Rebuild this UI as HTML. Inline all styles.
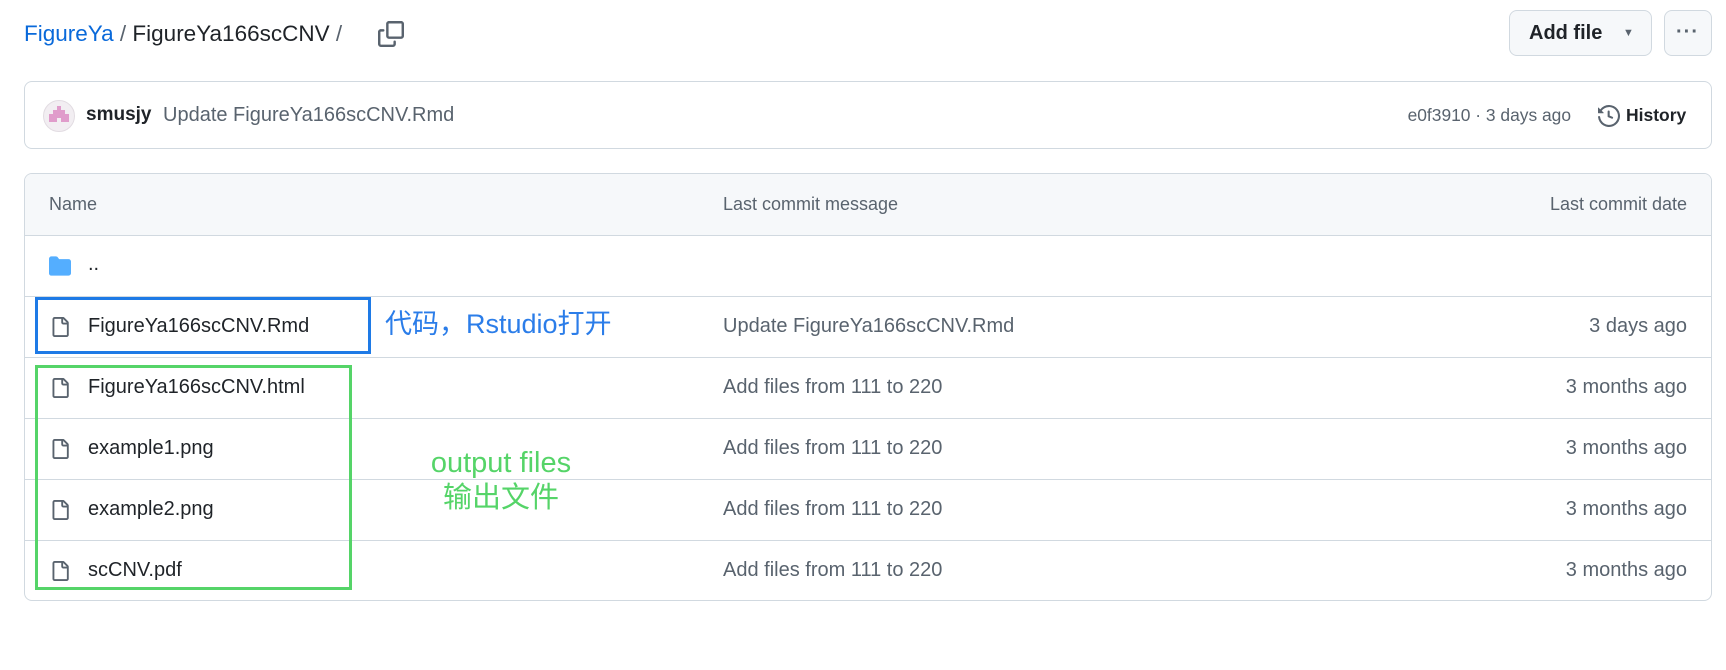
<!DOCTYPE html>
<html><head><meta charset="utf-8"><style>
*{box-sizing:border-box;margin:0;padding:0}
body{width:1726px;height:670px;background:#fff;font-family:"Liberation Sans","Noto Sans CJK SC",sans-serif;color:#1f2328;position:relative;overflow:hidden}
.a{position:absolute;white-space:nowrap}
.crumb{top:20px;left:24px;font-size:22.5px;line-height:28px}
.btn{position:absolute;top:10px;height:46px;border:1px solid #d1d9e0;border-radius:8px;background:#f6f8fa}
.box{position:absolute;left:24px;width:1688px;border:1px solid #d1d9e0;border-radius:8px}
.row{position:absolute;left:0;width:100%;height:61px;border-top:1px solid #d1d9e0;font-size:20px}
.row .n{position:absolute;left:63px;top:18px}
.row .m{position:absolute;left:698px;top:18px;color:#59636e}
.row .d{position:absolute;right:24px;top:18px;color:#59636e}
.row svg{position:absolute;left:25px;top:19px}
</style></head><body>
<div class="a crumb"><span style="color:#0969da">FigureYa</span> <span style="color:#59636e">/</span> FigureYa166scCNV <span style="color:#59636e">/</span></div>
<svg class="a" style="left:378px;top:21px" width="26" height="26" viewBox="0 0 16 16" fill="#59636e"><path d="M0 6.75C0 5.780.78 5 1.75 5h1.5a.75.75 0 0 1 0 1.5h-1.5a.25.25 0 0 0-.25.25v7.5c0 .14.11.25.25.25h7.5a.25.25 0 0 0 .25-.25v-1.5a.75.75 0 0 1 1.5 0v1.5A1.75 1.75 0 0 1 9.25 16h-7.5A1.75 1.75 0 0 1 0 14.25Z"/><path d="M5 1.75C5 .78 5.78 0 6.75 0h7.5C15.22 0 16 .78 16 1.75v7.5A1.75 1.75 0 0 1 14.25 11h-7.5A1.75 1.75 0 0 1 5 9.25Zm1.750-.25a.25.25 0 0 0-.25.25v7.5c0 .14.11.25.25.25h7.5a.25.25 0 0 0 .25-.25v-7.5a.25.25 0 0 0-.25-.25Z"/></svg>
<div class="btn" style="left:1509px;width:143px"><span class="a" style="left:19px;top:11px;font-size:20px;font-weight:bold">Add file</span><span class="a" style="left:113px;top:16px;font-size:11px;color:#59636e">▼</span></div>
<div class="btn" style="left:1664px;width:48px"><span class="a" style="left:11px;top:10px;font-size:20px;letter-spacing:1px;color:#59636e;font-weight:bold">···</span></div>

<div class="box" style="top:81px;height:68px">
 <div class="a" style="left:18px;top:18px;width:32px;height:32px;border-radius:50%;background:#f2eef2;border:1px solid #e2dce2"></div>
 <svg class="a" style="left:24px;top:24px" width="20" height="20" viewBox="0 0 5 5" fill="#e09ccb"><rect x="2" y="0" width="1" height="1"/><rect x="1" y="1" width="3" height="1"/><rect x="0" y="2" width="5" height="1"/><rect x="0" y="3" width="2" height="1"/><rect x="3" y="3" width="2" height="1"/></svg>
 <span class="a" style="left:61px;top:22px;font-size:19px;font-weight:bold">smusjy</span>
 <span class="a" style="left:138px;top:22px;font-size:20px;color:#59636e">Update FigureYa166scCNV.Rmd</span>
 <span class="a" style="right:140px;top:23px;font-size:17.4px;color:#59636e">e0f3910 · 3 days ago</span>
 <svg class="a" style="left:1573px;top:23px" width="22" height="22" viewBox="0 0 16 16" fill="#59636e"><path d="m.427 1.927 1.215 1.215a8.002 8.002 0 1 1-1.600 5.685.75.75 0 1 1 1.493-.154 6.5 6.5 0 1 0 1.18-4.458l1.358 1.358A.25.25 0 0 1 3.896 6H.25A.25.25 0 0 1 0 5.75V2.104a.25.25 0 0 1 .427-.177ZM7.75 4a.75.75 0 0 1 .75.75v2.992l2.028.812a.75.75 0 0 1-.557 1.392l-2.5-1A.751.751 0 0 1 7 8.25v-3.5A.75.75 0 0 1 7.75 4Z"/></svg>
 <span class="a" style="left:1601px;top:23px;font-size:17.5px;font-weight:bold">History</span>
</div>

<div class="box" style="top:173px;height:428px;overflow:hidden">
 <div class="a" style="left:0;top:0;width:100%;height:61px;background:#f6f8fa;font-size:18px;color:#59636e">
  <span class="a" style="left:24px;top:20px">Name</span>
  <span class="a" style="left:698px;top:20px">Last commit message</span>
  <span class="a" style="right:24px;top:20px">Last commit date</span>
 </div>
 <div class="row" style="top:61px">
  <svg style="left:23px;top:19px" width="24" height="22" viewBox="0 0 16 16" fill="#54aeff"><path d="M1.75 1A1.75 1.75 0 0 0 0 2.75v10.5C0 14.22.78 15 1.75 15h12.5A1.75 1.75 0 0 0 16 13.25v-8.5A1.75 1.75 0 0 0 14.25 3H7.5a.25.25 0 0 1-.2-.1l-.9-1.2C6.07 1.26 5.55 1 5 1H1.75Z"/></svg>
  <span class="n" style="top:17px">..</span>
 </div>
 <div class="row" style="top:122px"><svg width="20" height="22" viewBox="0 0 16 16" fill="#59636e"><path d="M2 1.75C2 .784 2.784 0 3.75 0h6.586c.464 0 .909.184 1.237.513l2.914 2.914c.329.328.513.773.513 1.237v9.586A1.75 1.75 0 0 1 13.25 16h-9.5A1.75 1.75 0 0 1 2 14.25Zm1.75-.25a.25.25 0 0 0-.25.25v12.5c0 .138.112.25.25.25h9.5a.25.25 0 0 0 .25-.25V6h-2.75A1.75 1.75 0 0 1 9 4.25V1.5Zm6.75.062V4.25c0 .138.112.25.25.25h2.688l-.011-.013-2.914-2.914-.013-.011Z"/></svg><span class="n">FigureYa166scCNV.Rmd</span><span class="m">Update FigureYa166scCNV.Rmd</span><span class="d">3 days ago</span></div>
 <div class="row" style="top:183px"><svg width="20" height="22" viewBox="0 0 16 16" fill="#59636e"><path d="M2 1.75C2 .784 2.784 0 3.75 0h6.586c.464 0 .909.184 1.237.513l2.914 2.914c.329.328.513.773.513 1.237v9.586A1.75 1.75 0 0 1 13.25 16h-9.5A1.75 1.75 0 0 1 2 14.25Zm1.75-.25a.25.25 0 0 0-.25.25v12.5c0 .138.112.25.25.25h9.5a.25.25 0 0 0 .25-.25V6h-2.75A1.75 1.75 0 0 1 9 4.25V1.5Zm6.75.062V4.25c0 .138.112.25.25.25h2.688l-.011-.013-2.914-2.914-.013-.011Z"/></svg><span class="n">FigureYa166scCNV.html</span><span class="m">Add files from 111 to 220</span><span class="d">3 months ago</span></div>
 <div class="row" style="top:244px"><svg width="20" height="22" viewBox="0 0 16 16" fill="#59636e"><path d="M2 1.75C2 .784 2.784 0 3.75 0h6.586c.464 0 .909.184 1.237.513l2.914 2.914c.329.328.513.773.513 1.237v9.586A1.75 1.75 0 0 1 13.25 16h-9.5A1.75 1.75 0 0 1 2 14.25Zm1.75-.25a.25.25 0 0 0-.25.25v12.5c0 .138.112.25.25.25h9.5a.25.25 0 0 0 .25-.25V6h-2.75A1.75 1.75 0 0 1 9 4.25V1.5Zm6.75.062V4.25c0 .138.112.25.25.25h2.688l-.011-.013-2.914-2.914-.013-.011Z"/></svg><span class="n">example1.png</span><span class="m">Add files from 111 to 220</span><span class="d">3 months ago</span></div>
 <div class="row" style="top:305px"><svg width="20" height="22" viewBox="0 0 16 16" fill="#59636e"><path d="M2 1.75C2 .784 2.784 0 3.75 0h6.586c.464 0 .909.184 1.237.513l2.914 2.914c.329.328.513.773.513 1.237v9.586A1.75 1.75 0 0 1 13.25 16h-9.5A1.75 1.75 0 0 1 2 14.25Zm1.75-.25a.25.25 0 0 0-.25.25v12.5c0 .138.112.25.25.25h9.5a.25.25 0 0 0 .25-.25V6h-2.75A1.75 1.75 0 0 1 9 4.25V1.5Zm6.75.062V4.25c0 .138.112.25.25.25h2.688l-.011-.013-2.914-2.914-.013-.011Z"/></svg><span class="n">example2.png</span><span class="m">Add files from 111 to 220</span><span class="d">3 months ago</span></div>
 <div class="row" style="top:366px"><svg width="20" height="22" viewBox="0 0 16 16" fill="#59636e"><path d="M2 1.75C2 .784 2.784 0 3.75 0h6.586c.464 0 .909.184 1.237.513l2.914 2.914c.329.328.513.773.513 1.237v9.586A1.75 1.75 0 0 1 13.25 16h-9.5A1.75 1.75 0 0 1 2 14.25Zm1.75-.25a.25.25 0 0 0-.25.25v12.5c0 .138.112.25.25.25h9.5a.25.25 0 0 0 .25-.25V6h-2.75A1.75 1.75 0 0 1 9 4.25V1.5Zm6.75.062V4.25c0 .138.112.25.25.25h2.688l-.011-.013-2.914-2.914-.013-.011Z"/></svg><span class="n">scCNV.pdf</span><span class="m">Add files from 111 to 220</span><span class="d">3 months ago</span></div>
</div>

<div class="a" style="left:35px;top:297px;width:336px;height:57px;border:3px solid #1e7ae6"></div>
<div class="a" style="left:385px;top:302px;font-size:27px;color:#2b7de9">代码，Rstudio打开</div>
<div class="a" style="left:35px;top:365px;width:317px;height:225px;border:3px solid #55d468"></div>
<div class="a" style="left:410px;top:446px;width:182px;text-align:center;font-size:29px;line-height:35px;color:#55d468">output files<br>输出文件</div>
</body></html>
